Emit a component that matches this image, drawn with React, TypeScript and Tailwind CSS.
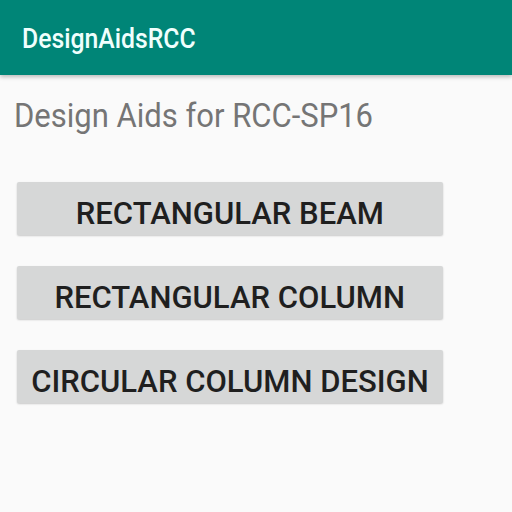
import React from 'react';

const buttons = ['RECTANGULAR BEAM', 'RECTANGULAR COLUMN', 'CIRCULAR COLUMN DESIGN'];

export default function App() {
    return (
        <div className="w-[512px] h-[512px] bg-[#fafafa] flex flex-col" style={{ fontFamily: 'Roboto, "Noto Sans", sans-serif' }}>
            <header className="h-[75px] bg-[#008577] flex items-center pl-[22px] pt-[2px] shadow-[0_2px_4px_rgba(0,0,0,0.25)]">
                <h1 className="inline-block origin-left scale-x-[0.9] text-[27.5px] leading-[32px] font-medium text-[#f0fffd]">DesignAidsRCC</h1>
            </header>
            <main className="flex flex-col pt-[20px]">
                <p className="pl-[14px]">
                    <span className="inline-block origin-left scale-x-[0.912] text-[34px] text-[#757575] leading-[40px]">Design Aids for RCC-SP16</span>
                </p>
                <div className="flex flex-col gap-[31px] pl-[17px] pt-[47px]">
                    {buttons.map((label) => (
                        <button
                            key={label}
                            className="w-[426px] h-[53px] pt-[9px] bg-[#d6d7d7] rounded-[2px] shadow-[0_1px_2px_rgba(0,0,0,0.2)] flex items-center justify-center"
                        >
                            <span className="inline-block scale-x-[0.97] text-[32px] leading-[38px] font-medium text-[#1f1f1f] whitespace-nowrap">{label}</span>
                        </button>
                    ))}
                </div>
            </main>
        </div>
    );
}
